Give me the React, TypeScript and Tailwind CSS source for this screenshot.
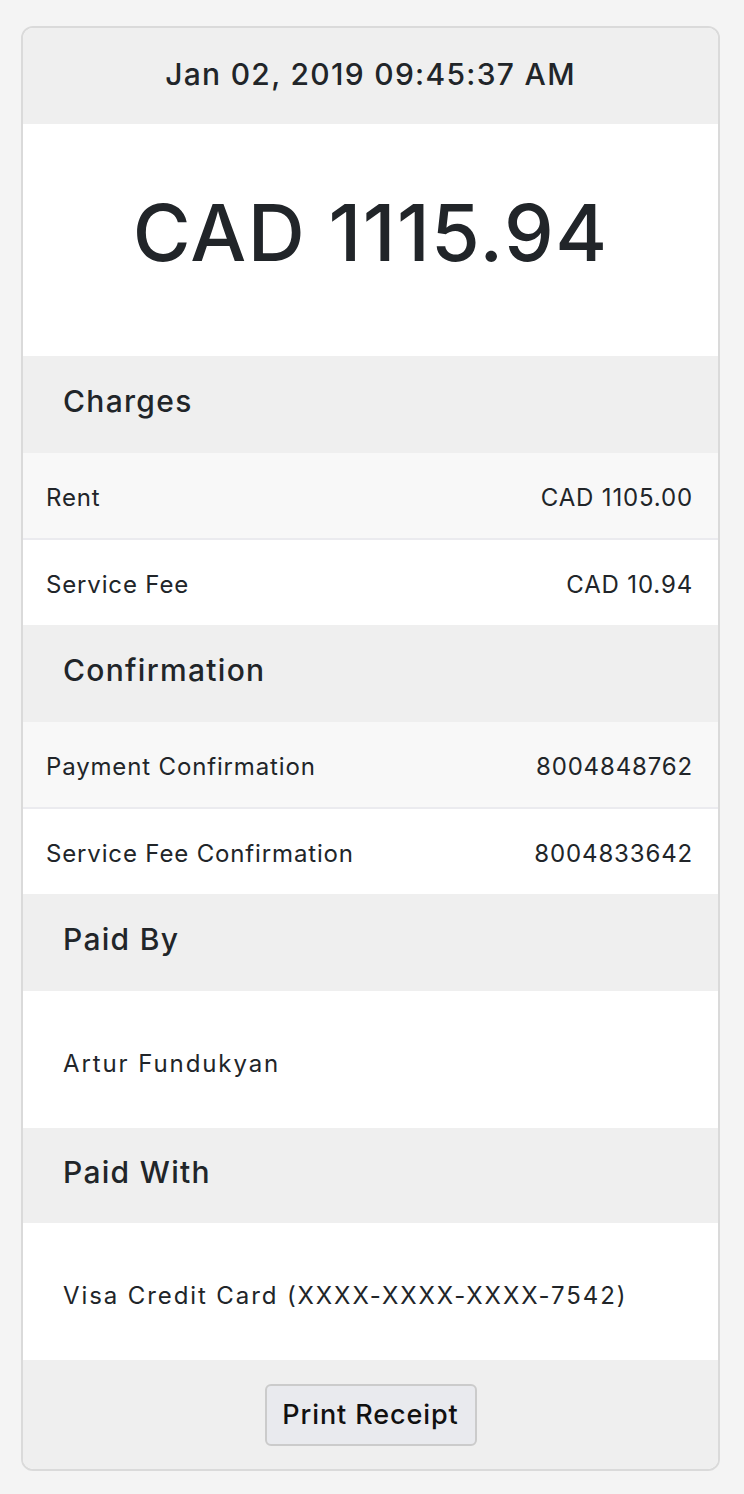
import React from "react";

const font = { fontFamily: 'Inter, "Open Sans", "Liberation Sans", sans-serif' };

function SectionHeader({ title, h = "h-[97px]" }: { title: string; h?: string }) {
  return (
    <div className={`flex ${h} items-center bg-[#efefef] pb-[6px] pl-[40px]`}>
      <h2 className="text-[30px] font-medium tracking-[1.3px] text-[#212529]">{title}</h2>
    </div>
  );
}

function Row({ label, value, striped, bordered }: { label: string; value: string; striped?: boolean; bordered?: boolean }) {
  return (
    <div
      className={`flex items-center justify-between pl-[23px] pr-[25px] pt-[5px] text-[24px] tracking-[0.85px] text-[#212529] ${
        striped ? "bg-[#f8f8f8]" : "bg-white"
      } ${bordered ? "h-[87px] border-b-2 border-[#ebebef]" : "h-[85px]"}`}
    >
      <span>{label}</span>
      <span>{value}</span>
    </div>
  );
}

function Block({ children }: { children: React.ReactNode }) {
  return (
    <div className="flex h-[137px] items-center bg-white pl-[40px] pt-[8px] text-[24px] tracking-[1.9px] text-[#212529]">
      {children}
    </div>
  );
}

export default function App() {
  return (
    <div className="min-h-[1494px] bg-[#f4f4f4] pb-[23px] pl-[21px] pr-[24px] pt-[26px]" style={font}>
      <div className="overflow-hidden rounded-xl border-2 border-[#dadada] bg-white">
        <div className="flex h-[96px] items-center justify-center bg-[#efefef] pb-[4px]">
          <span className="text-[30px] font-medium tracking-[1.3px] text-[#212529]">Jan 02, 2019 09:45:37 AM</span>
        </div>
        <div className="flex h-[232px] items-center justify-center bg-white pb-[16px]">
          <span className="text-[79px] font-medium leading-none tracking-[1.4px] text-[#212529]">CAD 1115.94</span>
        </div>
        <SectionHeader title="Charges" />
        <Row label="Rent" value="CAD 1105.00" striped bordered />
        <Row label="Service Fee" value="CAD 10.94" />
        <SectionHeader title="Confirmation" />
        <Row label="Payment Confirmation" value="8004848762" striped bordered />
        <Row label="Service Fee Confirmation" value="8004833642" />
        <SectionHeader title="Paid By" />
        <Block>Artur Fundukyan</Block>
        <SectionHeader title="Paid With" h="h-[95px]" />
        <Block>Visa Credit Card (XXXX-XXXX-XXXX-7542)</Block>
        <div className="flex h-[109px] items-start justify-center bg-[#efefef] pt-[24px]">
          <button className="flex h-[62px] w-[212px] items-center justify-center rounded-md border-2 border-[#cbcbcb] bg-[#e9eaee] text-[27px] font-medium tracking-[0.9px] text-[#111]">
            Print Receipt
          </button>
        </div>
      </div>
    </div>
  );
}
